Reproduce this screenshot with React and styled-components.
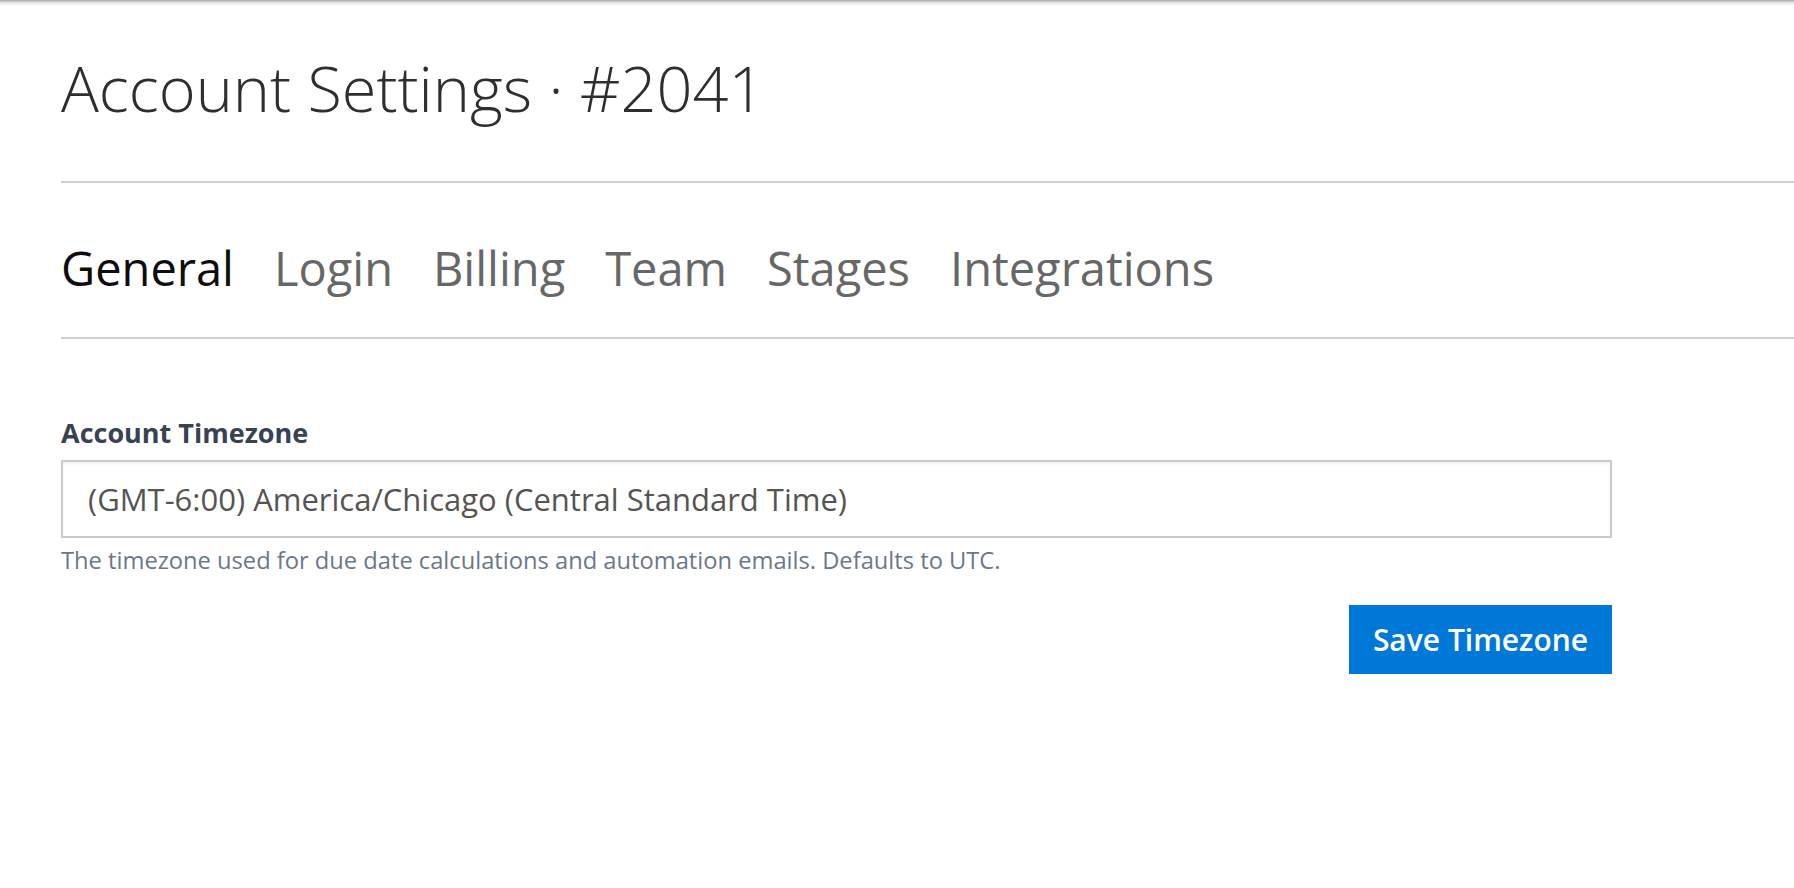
import React, { useState } from "react";
import styled, { createGlobalStyle } from "styled-components";

const GlobalStyle = createGlobalStyle`
  html, body {
    margin: 0;
    padding: 0;
    background: #fff;
    font-family: "Open Sans", "Liberation Sans", sans-serif;
  }
  * {
    box-sizing: border-box;
  }
`;

const tabs = ["General", "Login", "Billing", "Team", "Stages", "Integrations"];

export default function App() {
  const [active, setActive] = useState("General");

  return (
    <>
      <GlobalStyle />
      <Page>
        <Title>Account Settings · #2041</Title>
        <Divider />
        <TabBar>
          {tabs.map((tab) => (
            <Tab key={tab} $active={tab === active} onClick={() => setActive(tab)}>
              {tab}
            </Tab>
          ))}
        </TabBar>
        <Divider />
        <Form>
          <Label htmlFor="tz">Account Timezone</Label>
          <Input
            id="tz"
            readOnly
            value="(GMT-6:00) America/Chicago (Central Standard Time)"
          />
          <Help>
            The timezone used for due date calculations and automation emails. Defaults to UTC.
          </Help>
          <Actions>
            <Button type="button">Save Timezone</Button>
          </Actions>
        </Form>
      </Page>
    </>
  );
}

const Page = styled.main`
  min-height: 888px;
  padding: 50px 0 0 61px;
  background: linear-gradient(rgba(0, 0, 0, 0.34), rgba(0, 0, 0, 0.08) 3px, transparent 6px) no-repeat;
`;

const Title = styled.h1`
  margin: 0 0 55px;
  font-size: 63px;
  line-height: 76px;
  font-weight: 300;
  color: #2e2e2e;
`;

const Divider = styled.hr`
  margin: 0;
  border: 0;
  height: 2px;
  background: #cfcfcf;
`;

const TabBar = styled.nav`
  display: flex;
  gap: 40px;
  padding: 56px 0 40px;
`;

const Tab = styled.a`
  font-size: 47px;
  line-height: 58px;
  font-weight: 400;
  color: ${(p) => (p.$active ? "#0d0d0d" : "#676767")};
  cursor: pointer;
`;

const Form = styled.section`
  display: flex;
  flex-direction: column;
  width: 1551px;
  padding-top: 74px;
`;

const Label = styled.label`
  font-size: 27px;
  line-height: 40px;
  font-weight: 700;
  color: #394252;
  margin-bottom: 7px;
`;

const Input = styled.input`
  height: 78px;
  padding: 0 25px;
  border: 2px solid #cbcbcb;
  box-shadow: inset 0 2px 3px rgba(0, 0, 0, 0.05);
  font-family: inherit;
  font-size: 31px;
  color: #545454;
  outline: none;
`;

const Help = styled.p`
  margin: 4px 0 0;
  font-size: 23.7px;
  line-height: 36px;
  color: #6b7888;
`;

const Actions = styled.div`
  display: flex;
  justify-content: flex-end;
  margin-top: 27px;
`;

const Button = styled.button`
  width: 263px;
  height: 69px;
  border: 0;
  background: #0078d7;
  color: #fff;
  font-family: inherit;
  font-size: 30px;
  font-weight: 600;
  cursor: pointer;
`;
